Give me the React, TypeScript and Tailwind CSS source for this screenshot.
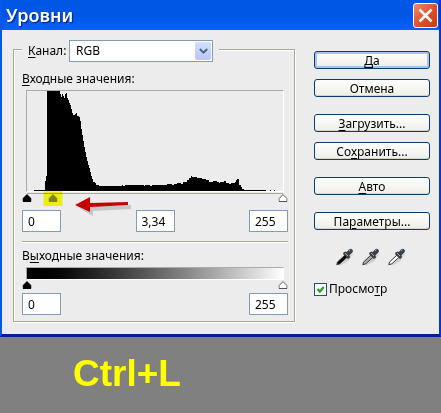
import { useState } from "react";
import type { ReactNode } from "react";

const Key = ({ children }: { children: ReactNode }) => (
  <span className="underline decoration-1 underline-offset-2">{children}</span>
);

function DialogButton({ children, primary = false }: { children: ReactNode; primary?: boolean }) {
  return (
    <button
      type="button"
      className={
        "flex h-[18px] w-full items-center justify-center rounded-[3px] border border-[#0c3c74] bg-linear-to-b from-white to-[#eeede6] pt-0.5 whitespace-nowrap " +
        (primary ? "shadow-[inset_0_0_0_2px_#a9c3f0]" : "shadow-[inset_0_-1px_0_#d8d4c8]")
      }
    >
      <span>{children}</span>
    </button>
  );
}

function NumberBox({ label, value }: { label: string; value: string }) {
  return (
    <input
      type="text"
      aria-label={label}
      defaultValue={value}
      className="h-[22px] w-[39px] border border-[#7f9db9] bg-white px-[5px] text-[12px] text-black outline-none"
    />
  );
}

function Marker({ label, value, place, fill }: { label: string; value: number; place: string; fill: string }) {
  return (
    <span className={"absolute top-0 h-2 w-[9px] -translate-x-1/2 " + place}>
      <svg viewBox="0 0 9 8" className="block h-2 w-[9px]" aria-hidden="true">
        <path d="M4.5 .6 8.5 4.6V7.5H.5V4.6Z" fill={fill} stroke={fill === "#fff" ? "#555" : fill} strokeWidth="1" strokeLinejoin="round" />
      </svg>
      <input type="range" aria-label={label} defaultValue={value} max={255} className="absolute inset-0 h-full w-full opacity-0" />
    </span>
  );
}

function Histogram() {
  return (
    <svg viewBox="0 0 256 100" preserveAspectRatio="none" shapeRendering="crispEdges" className="block h-[100px] w-full" role="img" aria-label="Гистограмма">
      <path d="M7 100V99H18V96L19 85H20V0H33V3H34V6H35V3H36V5H37V7H38V3H39V2H40V7H41V9H42V12H43V14H44V18H45V22H46V24H48V23H49V22H50V25H52V26H53V30H54V38H55V44H56V50H57V56H58V61H59V66H60V70H61V74H62V77H63V81H64V85H65V88H66V91H68V92H69V94H72V95H95V94H96V95H98V94H117V95H118V94H123V95H125V94H140V93H145V94H147V93H150V92H154V93H156V91H160V89H162V87H164V85H165V86H170V87H175V88H179V89H182V91H186V90H190V91H192V92H193V91H197V90H199V92H202V93H204V92H208V91H209V89H210V88H212V94H214V96H215V98H217V99H239V100ZM243 99h1v1h-1zM247 99h1v1h-1z" fill="#000" />
    </svg>
  );
}

function Eyedropper({ label, fill }: { label: string; fill: string }) {
  return (
    <button type="button" aria-label={label} className="h-[18px] w-[18px]">
      <svg viewBox="0 0 18 18" className="block h-[18px] w-[18px]">
        <path d="M3 17.500 12 9l5.500-4-5 8-8 4.500z" fill="#bbb" opacity=".6" />
        <path d="M.8 16.700 1.500 14 9 7l2.200 2.200L3.800 15.800z" fill={fill} stroke="#333" strokeWidth="1" />
        <path d="M7.500 4.500 9.500 3.500 10.800 4 13 1.500Q14.800 0 16.300 1.400T16.200 4.800L13.500 7.300 14 9.500 12 11 7 6z" fill="#3b4046" />
        <path d="m13 3 1.500-1.200M9 5l3 3" stroke="#a8adb3" strokeWidth="1" />
      </svg>
    </button>
  );
}

function Arrow() {
  return (
    <svg viewBox="0 0 58 20" className="pointer-events-none absolute top-[3px] left-12 h-5 w-[58px]" aria-hidden="true">
      <path d="M4 11 18 5v4l38-1v4l-38 2v5z" fill="#999" opacity=".45" />
      <path d="M0 8 15 0V6L53 5V8L15 10V15Z" fill="#c40000" />
    </svg>
  );
}

export default function App() {
  const [preview, setPreview] = useState(true);
  return (
    <div className="min-h-screen bg-[#808080] font-['Noto_Sans','Open_Sans',sans-serif] text-[12px] leading-4 text-black">
      <main className="border-x-2 border-b-[3px] border-r-[#0831d9] border-b-[#001ea0] border-l-[#0855ea] bg-[#ececec]">
        <header className="flex h-[30px] items-center justify-between bg-linear-to-b from-[#0058e6] via-[#0055e5] via-50% to-[#0562fa] pr-px pl-1">
          <h1 className="text-[18px] leading-6 font-semibold text-white [text-shadow:1px_1px_1px_#0a1e80]">Уровни</h1>
          <button type="button" aria-label="Закрыть" className="flex h-[25px] w-[25px] items-center justify-center rounded-[3px] border border-white bg-linear-to-br from-[#ee8a6c] via-[#e0512c] to-[#c83a10]">
            <svg viewBox="0 0 15 15" className="h-[15px] w-[15px]" aria-hidden="true">
              <path d="m1.500 1.500 12 12m0-12-12 12" stroke="#fff" strokeWidth="2.600" />
            </svg>
          </button>
        </header>

        <div className="flex items-start gap-[19px] pt-[7px] pr-[9px] pb-3 pl-[11px]">
          <fieldset className="min-w-0 flex-1 border border-[#a9a798] pr-[6px] pb-[6px] pl-2 shadow-[1px_1px_0_white,inset_1px_1px_0_white]">
            <legend className="bg-[#ececec] pt-[3px] pr-[6px] pl-[6px]">
              <span className="flex items-center gap-1">
                <label htmlFor="channel" className="w-[37px] whitespace-nowrap"><Key>К</Key>анал:</label>
                <span className="relative block">
                  <select id="channel" className="block h-[22px] w-36 appearance-none border border-[#7f9db9] bg-white pl-[6px] text-[12px] outline-none">
                    <option>RGB</option>
                  </select>
                  <span className="pointer-events-none absolute top-0.5 right-0.5 flex h-[18px] w-4 items-center justify-center rounded-[2px] bg-linear-to-b from-[#d5e0fc] to-[#b4c8f5]">
                    <svg viewBox="0 0 9 7" className="h-[7px] w-[9px]" aria-hidden="true">
                      <path d="m.8 1 3.700 3.700L8.200 1" fill="none" stroke="#4d6185" strokeWidth="2" />
                    </svg>
                  </span>
                </span>
              </span>
            </legend>

            <p className="mt-[9px]"><Key>В</Key>ходные значения:</p>
            <div className="mx-1 mt-[3px] border border-t-[#aaa] border-r-white border-b-white border-l-[#aaa]">
              <Histogram />
            </div>
            <div className="relative mx-[5px] mt-px h-[17px] border-t border-[#a9a798]">
              <Marker label="Тени" value={0} place="left-0" fill="#000" />
              <Marker label="Средние тона" value={26} place="left-[10%]" fill="#858585" />
              <Marker label="Света" value={255} place="left-full" fill="#fff" />
              <span className="pointer-events-none absolute -top-1 left-[10%] h-4 w-[19px] -translate-x-1/2 bg-[#ffff1a] mix-blend-multiply" />
              <Arrow />
            </div>
            <div className="flex justify-between">
              <NumberBox label="Входные тени" value="0" />
              <NumberBox label="Входная гамма" value="3,34" />
              <NumberBox label="Входные света" value="255" />
            </div>

            <hr className="mt-[9px] border-t border-[#a9a798] shadow-[0_1px_0_white]" />
            <p className="mt-[6px]">В<Key>ы</Key>ходные значения:</p>
            <div className="mx-1 mt-[3px] h-[13px] border border-t-[#aaa] border-r-white border-b-white border-l-[#aaa] bg-linear-to-r from-black to-white" />
            <div className="relative mx-[5px] mt-px h-3">
              <Marker label="Выходные тени" value={0} place="left-0" fill="#000" />
              <Marker label="Выходные света" value={255} place="left-full" fill="#fff" />
            </div>
            <div className="flex justify-between">
              <NumberBox label="Выходной минимум" value="0" />
              <NumberBox label="Выходной максимум" value="255" />
            </div>
          </fieldset>

          <div className="w-[116px] pt-[14px]">
            <div className="flex flex-col gap-[10px]">
              <DialogButton primary><Key>Д</Key>а</DialogButton>
              <DialogButton>Отмена</DialogButton>
            </div>
            <div className="mt-[17px] flex flex-col gap-[10px]">
              <DialogButton><Key>З</Key>агрузить...</DialogButton>
              <DialogButton>Со<Key>х</Key>ранить...</DialogButton>
            </div>
            <div className="mt-[17px] flex flex-col gap-[17px]">
              <DialogButton><Key>А</Key>вто</DialogButton>
              <DialogButton>Па<Key>р</Key>аметры...</DialogButton>
            </div>
            <div className="mt-[18px] flex justify-center gap-2 pr-[2px]">
              <Eyedropper label="Чёрная точка" fill="#000" />
              <Eyedropper label="Серая точка" fill="#aaa" />
              <Eyedropper label="Белая точка" fill="#fff" />
            </div>
            <label className="mt-[15px] flex items-center gap-[2px]">
              <span className="relative block h-[13px] w-[13px]">
                <input type="checkbox" checked={preview} onChange={(e) => setPreview(e.target.checked)} className="block h-[13px] w-[13px] appearance-none border border-[#1c5180] bg-white" />
                {preview && (
                  <svg viewBox="0 0 13 13" className="pointer-events-none absolute inset-0 h-[13px] w-[13px]" aria-hidden="true">
                    <path d="m3.500 6 2.300 2.500L9.800 4" fill="none" stroke="#21a121" strokeWidth="2.200" />
                  </svg>
                )}
              </span>
              <span>Просмо<Key>т</Key>р</span>
            </label>
          </div>
        </div>
      </main>
      <p className="mt-[17px] pl-[73px] font-['Liberation_Sans',sans-serif] text-[37px] leading-10 font-bold text-[#ffff00]">Ctrl+L</p>
    </div>
  );
}
